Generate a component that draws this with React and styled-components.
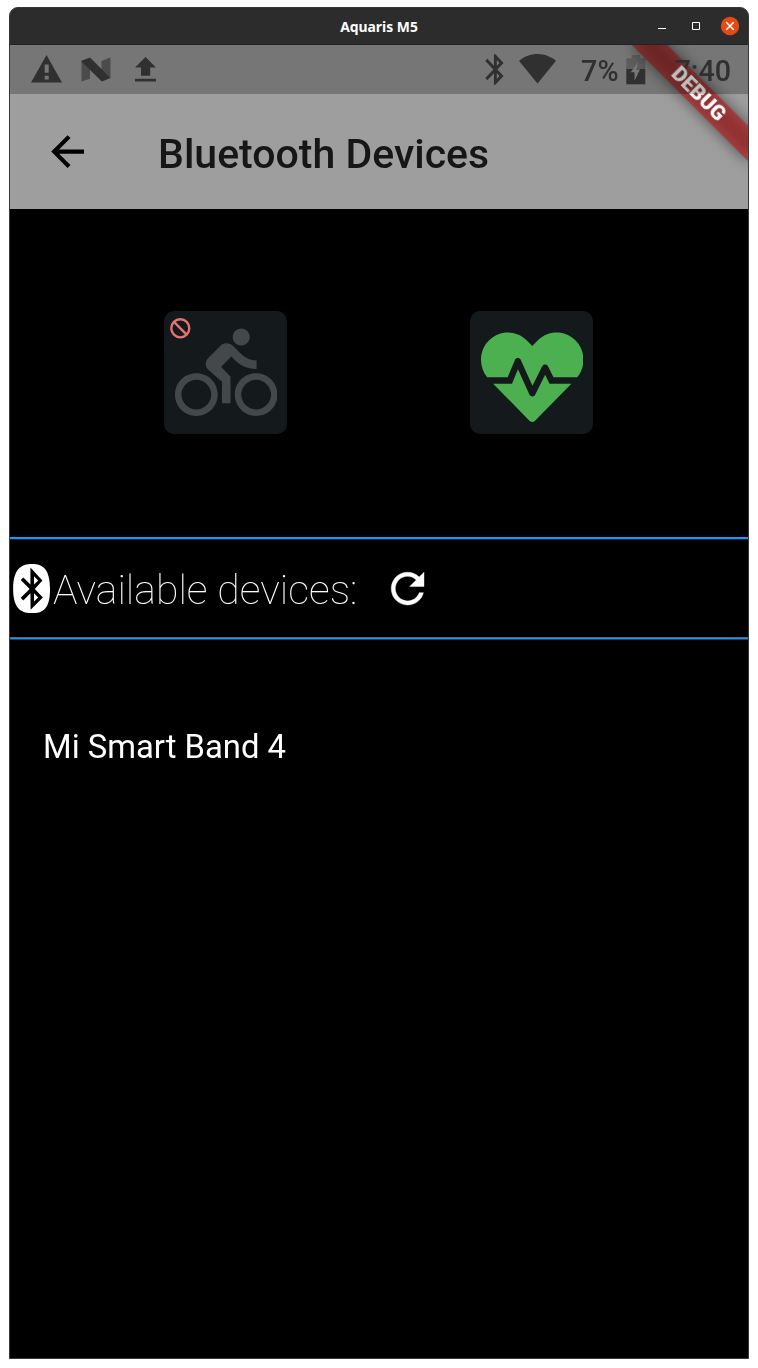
import React from "react";
import styled, { createGlobalStyle } from "styled-components";

const GlobalStyle = createGlobalStyle`
  * { box-sizing: border-box; }
  body { margin: 0; background: #fff; font-family: Roboto, "Liberation Sans", sans-serif; }
  svg { display: block; flex: none; }
`;

const Window = styled.div`
  width: 740px;
  height: 1352px;
  margin: 7px 9px 9px;
  border: 1px solid #383838;
  border-radius: 9px 9px 0 0;
  background: #2c2c2c;
  overflow: hidden;
`;

const TitleBar = styled.header`
  display: grid;
  grid-template-columns: 1fr auto 1fr;
  align-items: center;
  height: 37px;
  border-bottom: 1px solid #222;
  color: #fff;
`;

const WindowTitle = styled.div`
  grid-column: 2;
  padding-top: 1px;
  font: 700 13.9px "Noto Sans", "Open Sans", sans-serif;
  line-height: 20px;
  white-space: nowrap;
`;

const WindowControls = styled.div`
  justify-self: end;
  padding-right: 8px;
`;

const Screen = styled.main`
  position: relative;
  height: 1313px;
  overflow: hidden;
  background: #000;
`;

const TopArea = styled.div`
  height: 164px;
  padding-top: 49px;
  background: #9e9e9e;
`;

const AppBar = styled.div`
  display: flex;
  align-items: center;
  height: 115px;
  padding-left: 33px;
`;

const AppTitle = styled.h1`
  margin: 4px 0 0 66px;
  color: #161616;
  font-size: 41px;
  font-weight: 500;
  line-height: 48px;
  white-space: nowrap;
  will-change: transform;
`;

const StatusBar = styled.div`
  position: absolute;
  inset: 0 0 auto 0;
  z-index: 2;
  display: flex;
  justify-content: space-between;
  height: 49px;
  color: #404040;
  will-change: transform;
`;

const StatusScrim = styled.div`
  position: absolute;
  inset: 0 0 auto 0;
  z-index: 4;
  height: 49px;
  background: rgba(0, 0, 0, 0.25);
`;

const StatusGroup = styled.div`
  display: flex;
  align-items: center;
  gap: ${(p) => p.$gap || 0}px;
  padding: ${(p) => p.$pad};
`;

const StatusIcon = styled.svg`
  margin: ${(p) => p.$margin || 0};
`;

const StatusText = styled.span`
  margin: ${(p) => p.$margin || 0};
  font-size: 28.7px;
  font-weight: 500;
  line-height: 49px;
  padding-top: 3px;
  white-space: nowrap;
`;

const BannerStrip = styled.div`
  position: absolute;
  top: 57.4px;
  right: -82px;
  z-index: ${(p) => p.$layer};
  width: 164px;
  height: 24.6px;
  transform-origin: 82px -57.4px;
  transform: rotate(45deg);
`;

const BannerShadow = styled.div`
  height: 100%;
  background: rgba(0, 0, 0, 0.5);
  filter: blur(7.5px);
`;

const BannerFill = styled.div`
  height: 100%;
  background: rgba(183, 28, 28, 0.627);
`;

const BannerLabel = styled.div`
  color: #fff;
  font-size: 20.9px;
  font-weight: 900;
  line-height: 24.6px;
  text-align: center;
`;

const SensorRow = styled.section`
  display: flex;
  align-items: center;
  justify-content: center;
  gap: 183px;
  height: 328px;
  padding: 0 1px 2px 0;
`;

const SensorCard = styled.div`
  display: grid;
  place-items: center;
  width: 123px;
  height: 123px;
  border-radius: 10px;
  background: #141a1c;
  color: ${(p) => p.$color};

  > * { grid-area: 1 / 1; }
  > svg { margin: ${(p) => p.$iconMargin}; }
`;

const Corner = styled.div`
  place-self: start;
  padding: 5.3px 0 0 4.3px;
  color: #e57373;
`;

const SectionHeader = styled.section`
  display: flex;
  align-items: center;
  height: 102px;
  border-top: 2px solid #2196f3;
  border-bottom: 1px solid #2196f3;
  box-shadow: inset 0 1px #08264a, inset 0 -1px #44688a, 0 1px #0d447a;
  color: #fff;
`;

const SectionTitle = styled.h2`
  margin: 3px 25px 0 0;
  font-size: 41px;
  font-weight: 100;
  line-height: 48px;
  white-space: nowrap;
  will-change: transform;
`;

const DeviceList = styled.ul`
  margin: 0;
  padding: 88px 33px 0;
  list-style: none;
  will-change: transform;
`;

const DeviceItem = styled.li`
  color: #fff;
  font-size: 32.8px;
  line-height: 40px;
`;

const BluetoothGlyph = "M17.71 7.71L12 2h-1v7.59L6.41 5 5 6.41 10.59 12 5 17.59 6.41 19 11 14.41V22h1l5.71-5.71-4.3-4.29 4.3-4.29zM13 5.83l1.88 1.88L13 9.59V5.83zm1.88 10.46L13 18.17v-3.76l1.88 1.88z";

function MaterialIcon({ d, size = 49.2, weight = 0 }) {
  return (
    <svg width={size} height={size} viewBox="0 0 24 24" fill="currentColor" stroke="currentColor" strokeWidth={weight}>
      <path d={d} />
    </svg>
  );
}

function NotificationIcons() {
  return (
    <StatusGroup $gap={19} $pad="0 0 0 21px">
      <StatusIcon $margin="0 0 1px" width="31" height="28" viewBox="0 0 31 28" fill="currentColor">
        <path fillRule="evenodd" d="M15.5 0L31 27.5H0zM13.7 9.5v8.3h4V9.5zm0 11.3v3.6h4v-3.6z" />
      </StatusIcon>
      <StatusIcon width="30" height="25" viewBox="0 0 30 25" fill="currentColor">
        <path opacity=".6" d="M.5 3.5L9 12v9.7L.5 24.6zM20.5 4l9-3.6V21l-9-8z" />
        <path d="M.5 3.7L9 .4 29.5 21l-8.7 3.6L.5 4.5z" />
      </StatusIcon>
      <StatusIcon $margin="0 0 0 5px" width="21" height="25" viewBox="0 0 21 25" fill="currentColor">
        <path d="M10.5 0L21 10.5h-5.8v8.2H6v-8.2H0zM0 21.7h21V24.4H0z" />
      </StatusIcon>
    </StatusGroup>
  );
}

function SystemIcons() {
  return (
    <StatusGroup $pad="0 17px 0 0">
      <StatusIcon width="19" height="31" viewBox="4.8 1.8 13.2 20.4" preserveAspectRatio="none" fill="currentColor">
        <path d={BluetoothGlyph} />
      </StatusIcon>
      <StatusIcon $margin="0 0 1px 15px" width="37" height="30" viewBox="0 0 37 30" fill="currentColor">
        <path d="M0 6.8C5 2.8 11 0 18.5 0S32 2.8 37 6.8L18.5 29.4z" />
      </StatusIcon>
      <StatusText $margin="0 7px 0 25px">7%</StatusText>
      <StatusIcon width="20" height="30" viewBox="0 0 20 30" fill="currentColor">
        <path opacity=".35" d="M5.5 0h8.5v3.3h5.3V14H.3V3.3h5.2z" />
        <path d="M.3 14h19v15.3H.3z" />
        <path fill="#9e9e9e" d="M12 7L4.7 17.2h3.8v8.6L14 14.5h-3.6z" />
      </StatusIcon>
      <StatusText $margin="0 0 0 29px">7:40</StatusText>
    </StatusGroup>
  );
}

export default function App() {
  return (
    <>
      <GlobalStyle />
      <Window>
        <TitleBar>
          <WindowTitle>Aquaris M5</WindowTitle>
          <WindowControls>
            <svg width="83" height="20" viewBox="0 0 83 20" fill="none" stroke="#fff">
              <path d="M1 12.5h8" />
              <path d="M35.5 6.5h7v7h-7z" />
              <circle cx="73" cy="10" r="9.2" fill="#e04b16" stroke="none" />
              <path d="M69.3 6.3l7.4 7.4M76.7 6.3l-7.4 7.4" strokeWidth="1.5" />
            </svg>
          </WindowControls>
        </TitleBar>

        <Screen>
          <BannerStrip $layer={1}>
            <BannerShadow />
          </BannerStrip>
          <BannerStrip $layer={1}>
            <BannerFill />
          </BannerStrip>
          <StatusBar>
            <NotificationIcons />
            <SystemIcons />
          </StatusBar>
          <BannerStrip $layer={3}>
            <BannerLabel>DEBUG</BannerLabel>
          </BannerStrip>
          <StatusScrim />

          <TopArea>
            <AppBar>
              <MaterialIcon d="M20 11H7.83l5.59-5.59L12 4l-8 8 8 8 1.41-1.41L7.83 13H20v-2z" />
              <AppTitle>Bluetooth Devices</AppTitle>
            </AppBar>
          </TopArea>

          <SensorRow>
            <SensorCard $color="#44484a" $iconMargin="2px 0 0 1px">
              <MaterialIcon
                size={102.5}
                d="M15.5 5.5c1.1 0 2-.9 2-2s-.9-2-2-2-2 .9-2 2 .9 2 2 2zM5 12c-2.8 0-5 2.2-5 5s2.2 5 5 5 5-2.2 5-5-2.2-5-5-5zm0 8.5c-1.9 0-3.5-1.6-3.5-3.5s1.6-3.5 3.5-3.5 3.5 1.6 3.5 3.5-1.6 3.5-3.5 3.5zm5.8-10l2.4-2.4.8.8c1.3 1.3 3 2.1 5.1 2.1V9c-1.5 0-2.7-.6-3.6-1.5l-1.9-1.9c-.5-.4-1-.6-1.6-.6s-1.1.2-1.4.6L7.8 8.4c-.4.4-.6.9-.6 1.4 0 .6.2 1.1.6 1.4L11 14v5h2v-6.2l-2.2-2.3zM19 12c-2.8 0-5 2.2-5 5s2.2 5 5 5 5-2.2 5-5-2.2-5-5-5zm0 8.5c-1.9 0-3.5-1.6-3.5-3.5s1.6-3.5 3.5-3.5 3.5 1.6 3.5 3.5-1.6 3.5-3.5 3.5z"
              />
              <Corner>
                <svg width="24.6" height="24.6" viewBox="0 0 24 24" fill="none" stroke="currentColor" strokeWidth="2.3">
                  <circle cx="12" cy="12" r="8.8" />
                  <path d="M5.8 5.8l12.4 12.4" />
                </svg>
              </Corner>
            </SensorCard>
            <SensorCard $color="#4caf50" $iconMargin="10px 0 0 1px">
              <svg width="102.5" height="102.5" viewBox="0 0 512 512" fill="currentColor">
                <path d="M320.2 243.8l-49.7 99.4c-6 12.1-23.4 11.7-28.9-.6l-56.9-126.3-30 71.7H60.6l182.5 186.5c7.1 7.3 18.6 7.3 25.7 0L451.4 288H342.3l-22.1-44.2zM473.7 73.9l-2.4-2.5c-51.5-52.6-135.8-52.6-187.4 0L256 100l-27.9-28.5c-51.5-52.7-135.9-52.7-187.4 0l-2.4 2.4C-10.4 123.7-12.5 203 31 256h102.4l35.9-86.2c5.4-12.9 23.6-13.1 29.4-.4l58.2 129.3 49-97.9c5.9-11.8 22.7-11.8 28.6 0l27.6 55.2H481c43.5-53 41.4-132.3-7.3-182.1z" />
              </svg>
            </SensorCard>
          </SensorRow>

          <SectionHeader>
            <svg width="43.2" height="49.2" viewBox="0 0 448 512" fill="currentColor">
              <path d="M292.6 171.1L249.7 214l-.3-86 43.2 43.1m-43.2 219.8l43.1-43.1-42.9-42.9-.2 86zM416 259.4C416 465 344.1 512 230.9 512S32 465 32 259.4 115.4 0 228.6 0 416 53.9 416 259.4zm-158.5 0l79.4-88.6L211.8 36.5v176.9L138 139.6l-27 26.9 92.7 93-92.7 93 26.9 26.9 73.8-73.8 2.3 170 127.4-127.5-83.9-88.7z" />
            </svg>
            <SectionTitle>Available devices:</SectionTitle>
            <MaterialIcon
              weight={0.2}
              d="M17.65 6.35C16.2 4.9 14.21 4 12 4c-4.42 0-7.99 3.58-7.99 8s3.57 8 7.99 8c3.73 0 6.84-2.55 7.73-6h-2.08c-.82 2.33-3.04 4-5.65 4-3.31 0-6-2.69-6-6s2.69-6 6-6c1.66 0 3.14.69 4.22 1.78L13 11h7V4l-2.35 2.35z"
            />
          </SectionHeader>

          <DeviceList>
            <DeviceItem>Mi Smart Band 4</DeviceItem>
          </DeviceList>
        </Screen>
      </Window>
    </>
  );
}
